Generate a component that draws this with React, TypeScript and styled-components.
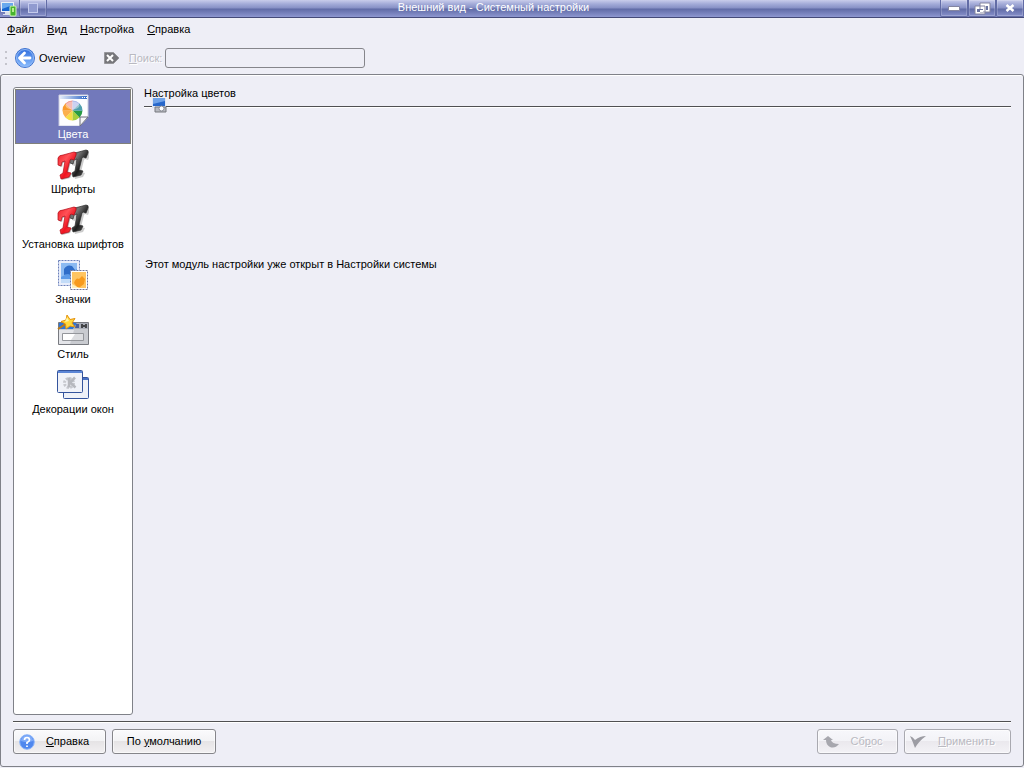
import React from "react";
import styled, { createGlobalStyle, css } from "styled-components";

const Global = createGlobalStyle`
  * { box-sizing: border-box; }
  body { margin: 0; background: #eeeef6; color: #000; }
  body, button, input { font-family: "Liberation Sans", Arial, sans-serif; font-size: 11px; line-height: 14px; }
  svg { display: block; flex: none; }
`;

const Window = styled.div`
  min-height: 100vh;
  display: flex;
  flex-direction: column;
  padding-bottom: 1px;
`;

const TitleBar = styled.header`
  display: flex;
  height: 18px;
  flex: none;
  background: linear-gradient(#c9cdeb 0, #a3abd8 4px, #8790c5 8px, #606ba6 9px, #7680bb 13px, #8e97d0 17px);
  border-bottom: 1px solid #454a78;
`;

const Title = styled.h1`
  flex: 1;
  margin: 0;
  text-align: center;
  font-size: 11px;
  font-weight: normal;
  line-height: 14px;
  color: #fff;
`;

const TitleButton = styled.button`
  width: 28px;
  height: 17px;
  padding: 0;
  display: flex;
  align-items: center;
  justify-content: center;
  background: transparent;
  border: 1px solid #626ca6;
  border-top: 0;
  border-radius: 0 0 2px 2px;
  box-shadow: inset 0 0 0 1px #ffffff30;
`;

const AppMark = styled.div`
  width: 19px;
`;

const MenuBar = styled.nav`
  display: flex;
  gap: 13px;
  padding: 4px 7px;
  height: 23px;
`;

const MenuLink = styled.a`
  color: #000;
  text-decoration: none;
`;

const Key = styled.span`
  text-decoration: underline;
  text-underline-offset: 1px;
`;

const ToolBar = styled.div`
  display: flex;
  align-items: center;
  height: 33px;
  padding: 0 4px;
`;

const ToolButton = styled.button`
  display: flex;
  align-items: center;
  gap: 3px;
  padding: 0;
  background: none;
  border: 0;
  color: #000;
`;

const Grip = styled.svg`
  margin-right: 6px;
`;

const ClearButton = styled(ToolButton)`
  margin: 0 9px 0 19px;
`;

const disabledText = css`
  color: #b9b9c1;
  text-shadow: 1px 1px #fff;
`;

const SearchLabel = styled.label`
  ${disabledText}
  margin-right: 3px;
`;

const SearchInput = styled.input`
  width: 200px;
  height: 20px;
  background: #eeeef6;
  border: 1px solid #85858b;
  border-radius: 3px;
  padding: 0 4px;
`;

const Frame = styled.div`
  flex: 1;
  display: flex;
  flex-direction: column;
  border: 1px solid #7f8188;
  border-radius: 3px;
  padding: 12px;
  box-shadow: inset 0 1px #fff;
`;

const Columns = styled.div`
  flex: 1;
  display: flex;
  gap: 11px;
`;

const Sidebar = styled.nav`
  width: 120px;
  flex: none;
  background: #fff;
  border: 1px solid #7f8188;
  border-radius: 3px;
  padding: 1px;
`;

const SideItem = styled.a<{ $active?: boolean }>`
  display: flex;
  flex-direction: column;
  align-items: center;
  gap: 1px;
  height: 55px;
  padding-top: 5px;
  white-space: nowrap;
  text-decoration: none;
  color: ${(p) => (p.$active ? "#fff" : "#000")};
  background: ${(p) => (p.$active ? "#7279bb" : "transparent")};
  outline: ${(p) => (p.$active ? "1px solid #80807a" : "none")};
  outline-offset: -1px;
`;

const Module = styled.main`
  flex: 1;
  min-width: 0;
`;

const ModuleHeading = styled.header`
  position: relative;
  height: 20px;
  border-bottom: 1px solid #505052;
  box-shadow: 0 1px #fff;
`;

const Heading = styled.h2`
  margin: 0;
  font-size: 11px;
  font-weight: normal;
  line-height: 12px;
`;

const HeadingIcon = styled.svg`
  position: absolute;
  left: 7px;
  top: 10px;
`;

const Message = styled.p`
  margin: 150px 1px 0;
`;

const Footer = styled.footer`
  display: flex;
  gap: 6px;
  margin-top: 6px;
  padding-top: 7px;
  border-top: 1px solid #505052;
  box-shadow: inset 0 1px #fff;
`;

const PushButton = styled.button<{ $width: number }>`
  display: flex;
  align-items: center;
  width: ${(p) => p.$width}px;
  height: 25px;
  padding: 0 5px;
  color: #000;
  background: linear-gradient(#fafafc 0, #f3f3f5 11px, #e5e3e5 11px, #f2f0f2 100%);
  border: 1px solid #85858a;
  border-radius: 3px;
  box-shadow: inset 0 0 0 1px #ffffff90;
  &:disabled {
    ${disabledText}
    border-color: #a9a9b0;
    background: linear-gradient(#f7f7fb 0, #f3f3f7 11px, #eae8ed 11px, #f3f2f6 100%);
  }
`;

const Caption = styled.span`
  flex: 1;
  text-align: center;
  padding-bottom: 2px;
`;

const Spacer = styled.div`
  flex: 1;
`;

function AppIcon() {
  return (
    <svg width="19" height="17" viewBox="0 0 19 17">
      <path d="M1 2h13v10H1z" fill="#e8edf5" />
      <path d="M2 3h11v8H2z" fill="#1765d1" />
      <path d="M2 3h11v2L2 9z" fill="#69a8ee" />
      <path d="M5 12h5v2h2v1H3v-1h2z" fill="#dbe0eb" />
      <rect x="10" y="6" width="6" height="10" rx="1" fill="#48b52e" stroke="#d7f5ba" />
      <path d="M12 8h2v4h-2z" fill="#b7eb92" />
    </svg>
  );
}

function BackIcon() {
  return (
    <svg width="22" height="22" viewBox="0 0 22 22">
      <defs>
        <linearGradient id="back" x1="0" y1="0" x2="0" y2="1">
          <stop stopColor="#2d6bdc" />
          <stop offset="1" stopColor="#8ec0ff" />
        </linearGradient>
      </defs>
      <circle cx="11" cy="11" r="9.5" fill="url(#back)" stroke="#4275cf" />
      <circle cx="11" cy="11" r="8.5" fill="none" stroke="#8fb8f7" />
      <path d="M10.500 6 5.500 11l5 5M6 11h10" fill="none" stroke="#fff" strokeWidth="2.800" strokeLinejoin="round" strokeLinecap="round" />
    </svg>
  );
}

function ClearIcon() {
  return (
    <svg width="16" height="14" viewBox="0 0 16 14">
      <path d="M.5 1.500h9l5.500 5.500-5.500 5.500h-9z" fill="#77777b" stroke="#96969a" />
      <path d="m3 4 6 6m0-6-6 6" stroke="#fff" strokeWidth="2" />
    </svg>
  );
}

function ColorsIcon() {
  const wheel = ["#279a45", "#a5cf3c", "#f6dc45", "#fbb04c", "#f99a2c", "#ef8f86", "#a9b4ea", "#4f9fae"];
  const rim = (deg: number) => {
    const a = (deg * Math.PI) / 180;
    return `${(15.5 + 10 * Math.cos(a)).toFixed(2)} ${(16.5 + 10 * Math.sin(a)).toFixed(2)}`;
  };
  return (
    <svg width="32" height="32" viewBox="0 0 32 32">
      <defs>
        <linearGradient id="bar">
          <stop stopColor="#e4ecfa" />
          <stop offset="1" stopColor="#2f66c6" />
        </linearGradient>
      </defs>
      <path d="M2 1h29v22l-8 9H2z" fill="#fdfdff" stroke="#c9cde0" />
      <path d="M3 2h27v3H3z" fill="url(#bar)" />
      <path d="M25 3.500h1m1 0h1m1 0h1" stroke="#fff" />
      {wheel.map((color, i) => (
        <path key={color} d={`M15.5 16.5L${rim(i * 45)}A10 10 0 0 1 ${rim(i * 45 + 46)}Z`} fill={color} />
      ))}
      <ellipse cx="15.500" cy="11.500" rx="7" ry="4" fill="#fff" opacity=".4" />
      <path d="M31 23h-8v9z" fill="#f5f5f7" stroke="#6d6f7c" />
    </svg>
  );
}

function FontsIcon() {
  const tee = "M1 6Q2 3 6 3L17 0Q20 0 19 3L17 8 14 7 13 8 10 20 14 21 12 25 4 27 3 23 6 21 8 9 5 10 4 14 1 13Z";
  return (
    <svg width="32" height="32" viewBox="0 0 32 32">
      <defs>
        <linearGradient id="red" x1="0" y1="0" x2="1" y2="1">
          <stop stopColor="#f02028" />
          <stop offset=".35" stopColor="#ff5258" />
          <stop offset=".6" stopColor="#f01420" />
          <stop offset="1" stopColor="#ff5a5a" />
        </linearGradient>
        <linearGradient id="dark" x1="0" y1="0" x2="1" y2="1">
          <stop stopColor="#333" />
          <stop offset=".3" stopColor="#777" />
          <stop offset=".6" stopColor="#1c1c1c" />
          <stop offset="1" stopColor="#777" />
        </linearGradient>
      </defs>
      <path d={tee} transform="translate(14 3)" fill="#999" opacity=".5" />
      <path d={tee} transform="translate(12 1)" fill="url(#dark)" stroke="#2c2c2c" strokeWidth=".7" />
      <path d={tee} transform="translate(1 4)" fill="#777" opacity=".5" />
      <path d={tee} transform="translate(0 3)" fill="url(#red)" stroke="#b00814" strokeWidth=".7" />
    </svg>
  );
}

function StampsIcon() {
  return (
    <svg width="32" height="32" viewBox="0 0 32 32">
      <rect x="1.500" y="1.500" width="21" height="25" fill="#e9eefb" stroke="#6b80ba" strokeDasharray="2 1" />
      <path d="M4 4h16v20H4z" fill="#5c9ae8" />
      <path d="M4 4h16v6L4 18z" fill="#8bbaf2" />
      <path d="M7 10q3-5 8-3l3 4-2 6-5-2-4 1z" fill="#2f6dc9" />
      <path d="M4 20h10v4H4z" fill="#c3dcf8" />
      <rect x="13.500" y="11.500" width="17" height="19" fill="#fff" stroke="#6f7597" strokeDasharray="2 1" />
      <path d="M15 13h14v16H15z" fill="#ffc562" />
      <path d="M17 24q2-6 5-4l3-3 3 3-1 5-4 3h-3z" fill="#f79a1d" />
      <path d="m15 25 7 4h-7z" fill="#ffefbd" />
    </svg>
  );
}

function StyleIcon() {
  return (
    <svg width="32" height="32" viewBox="0 0 32 32">
      <path d="M1.500 8.500h30v22h-30z" fill="#c9cbd0" stroke="#787a80" />
      <path d="M2 9h18l-4 6H2z" fill="#2c76d8" />
      <path d="M20 9h11v6H17z" fill="#aaaeb8" />
      <path d="M19 10h3v4h-4z" fill="#4c5f96" />
      <path d="M25 10v4m4-4v4m-3-2h2" stroke="#222" strokeWidth="1.500" />
      <path d="M2 16h15l-4 14H2z" fill="#e4e5e9" />
      <path d="M5.500 19.500h21v7h-21z" fill="#dcdde0" stroke="#94969b" />
      <path d="M6 20h12l-4 6H6z" fill="#fff" />
      <path d="m1 15 9-6" stroke="#bd7b16" strokeWidth="2" />
      <path d="m10 1 3 4.500 5-1-3 4.500 3 4-5-1-4 3-.500-5L4 7.500l5-1.500z" fill="#ffd83c" stroke="#e5920c" />
      <path d="m10 3 2 4-4 1z" fill="#fff4a5" />
    </svg>
  );
}

function DecorIcon() {
  return (
    <svg width="32" height="32" viewBox="0 0 32 32">
      <rect x="6.500" y="8.500" width="25" height="21" rx="1" fill="#eef1f8" stroke="#34549d" />
      <path d="M7 9h24v2H7z" fill="#4a72c4" />
      <rect x=".5" y="1.500" width="25" height="22" rx="1" fill="#f0f2f8" stroke="#34549d" />
      <path d="M1 2h24v2H1z" fill="#5c86d6" />
      <circle cx="12" cy="14" r="4.500" fill="none" stroke="#c6c8ce" strokeWidth="3" strokeDasharray="2.200 1.300" />
      <path d="M12 8.500v10M18 8.500l-5 5 5.500 5" fill="none" stroke="#b6b8be" strokeWidth="2.500" />
    </svg>
  );
}

function HelpIcon() {
  return (
    <svg width="16" height="16" viewBox="0 0 16 16">
      <circle cx="8" cy="8" r="7.300" fill="#4f87ee" stroke="#8eb6fa" />
      <path d="M2 7a6 6 0 0 1 12 0Q8 9 2 7" fill="#7fabf8" />
      <path d="M5.500 6q0-2.500 2.500-2.500T10.500 6Q10.500 7.500 8 8.500V10m0 1.500v1.500" fill="none" stroke="#fff" strokeWidth="1.700" />
    </svg>
  );
}

const sections = [
  { name: "Цвета", Icon: ColorsIcon },
  { name: "Шрифты", Icon: FontsIcon },
  { name: "Установка шрифтов", Icon: FontsIcon },
  { name: "Значки", Icon: StampsIcon },
  { name: "Стиль", Icon: StyleIcon },
  { name: "Декорации окон", Icon: DecorIcon },
];

const menus = ["Файл", "Вид", "Настройка", "Справка"];

export default function App() {
  return (
    <Window>
      <Global />
      <TitleBar>
        <AppMark><AppIcon /></AppMark>
        <TitleButton aria-label="Меню окна">
          <svg width="12" height="12"><rect x="1.500" y="1.500" width="9" height="9" fill="#919bd0" stroke="#c5cbed" /></svg>
        </TitleButton>
        <Title>Внешний вид - Системный настройки</Title>
        <TitleButton aria-label="Свернуть">
          <svg width="12" height="6"><path d="M.5 1.500h11v4H.5z" fill="#fff" stroke="#8485a0" /></svg>
        </TitleButton>
        <TitleButton aria-label="Восстановить">
          <svg width="17" height="13">
            <path d="M6 1h10v9H6zM1 4h10v8H1z" fill="#fff" stroke="#8485a0" />
            <path d="M12 4h2v4h-2zM3 7h6v3H3z" fill="#68729f" />
            <path d="M6 8h3v2H6z" fill="#fff" />
          </svg>
        </TitleButton>
        <TitleButton aria-label="Закрыть">
          <svg width="12" height="10"><path d="m2.500 2 7 6m0-6-7 6" stroke="#fff" strokeWidth="2.500" /></svg>
        </TitleButton>
      </TitleBar>
      <MenuBar>
        {menus.map((m) => (
          <MenuLink href="#" key={m}><Key>{m[0]}</Key>{m.slice(1)}</MenuLink>
        ))}
      </MenuBar>
      <ToolBar>
        <Grip width="4" height="16"><path d="M1 1h2v2H1zm0 6h2v2H1zm0 6h2v2H1z" fill="#c4c4cc" /></Grip>
        <ToolButton><BackIcon />Overview</ToolButton>
        <ClearButton aria-label="Очистить поиск"><ClearIcon /></ClearButton>
        <SearchLabel htmlFor="search"><Key>П</Key>оиск:</SearchLabel>
        <SearchInput id="search" disabled />
      </ToolBar>
      <Frame>
        <Columns>
          <Sidebar>
            {sections.map(({ name, Icon }, i) => (
              <SideItem href="#" key={name} $active={i === 0}><Icon />{name}</SideItem>
            ))}
          </Sidebar>
          <Module>
            <ModuleHeading>
              <Heading>Настройка цветов</Heading>
              <HeadingIcon width="17" height="17" viewBox="0 0 17 17">
                <path d="M1 1h14v10H1z" fill="#dfe5f2" />
                <path d="M2 1h12v8H2z" fill="#2767cb" />
                <path d="M2 1h12v3L2 7z" fill="#6fa2e8" />
                <path d="M4 10h11v5H4z" fill="#b7b9c0" stroke="#76787e" />
                <circle cx="10.500" cy="11.500" r="2.500" fill="#fff" stroke="#888b96" />
              </HeadingIcon>
            </ModuleHeading>
            <Message>Этот модуль настройки уже открыт в Настройки системы</Message>
          </Module>
        </Columns>
        <Footer>
          <PushButton $width={93}><HelpIcon /><Caption><Key>С</Key>правка</Caption></PushButton>
          <PushButton $width={104}><Caption>По <Key>у</Key>молчанию</Caption></PushButton>
          <Spacer />
          <PushButton $width={81} disabled>
            <svg width="18" height="16" viewBox="0 0 18 16"><path d="m0 6 5-4 5 4H8q1 4 8 4-4 5-9 3-4-2-4-7z" fill="#a7a7ae" /></svg>
            <Caption>Сб<Key>р</Key>ос</Caption>
          </PushButton>
          <PushButton $width={107} disabled>
            <svg width="18" height="16" viewBox="0 0 18 16"><path d="M0 2q3 1 5 4 5-4 11-4Q9 7 5 14 3 8 0 2" fill="#9c9ca3" /></svg>
            <Caption><Key>П</Key>рименить</Caption>
          </PushButton>
        </Footer>
      </Frame>
    </Window>
  );
}
